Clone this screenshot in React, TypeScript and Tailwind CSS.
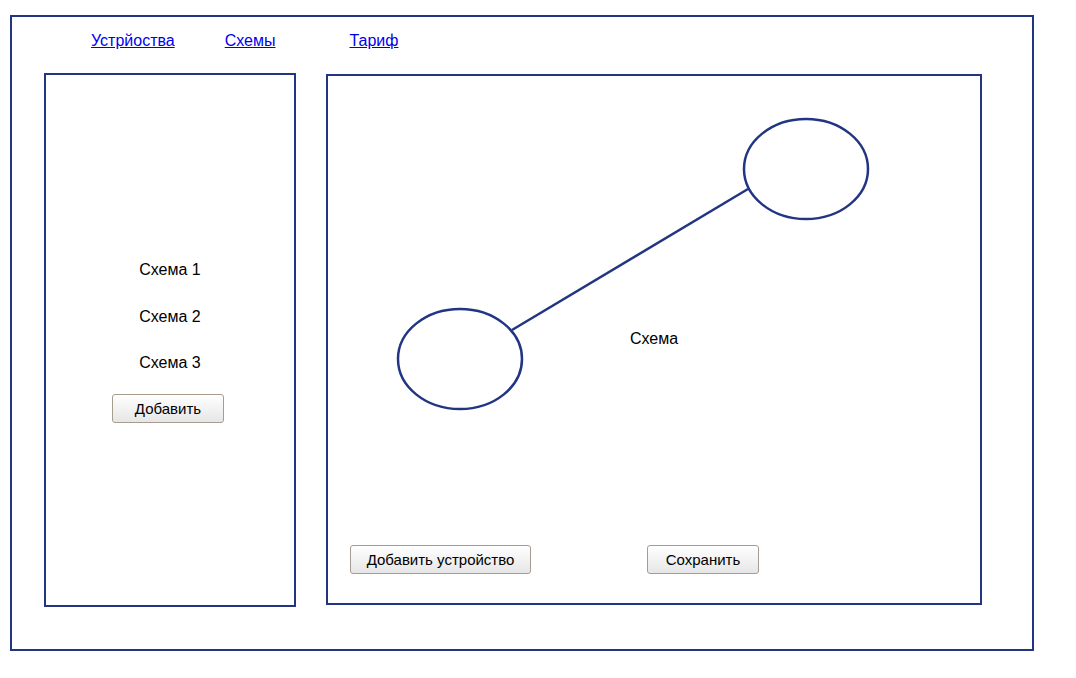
const EDGE = "border-2 border-[#213583]";

function Btn({ children, className = "" }: { children: string; className?: string }) {
  return (
    <button
      className={`h-[29px] rounded-[3px] border border-[#a89c8e] bg-gradient-to-b from-white to-[#e6e6e6] text-[15px] leading-none text-black ${className}`}
    >
      {children}
    </button>
  );
}

export default function App() {
  return (
    <div className="h-[678px] w-[1076px] bg-white pl-[10px] pt-[15px] font-['Liberation_Sans',Arial,sans-serif] text-black">
      <div className={`flex h-[636px] w-[1024px] flex-col ${EDGE}`}>
        <nav className="flex pl-[79px] pt-[15px] text-base leading-[18px]">
          <a href="#" className="text-[#0000ee] underline">Устрйоства</a>
          <a href="#" className="ml-[50px] text-[#0000ee] underline">Схемы</a>
          <a href="#" className="ml-[74px] text-[#0000ee] underline">Тариф</a>
        </nav>

        <div className="mt-[23px] flex items-start pl-[32px]">
          <aside className={`flex h-[534px] w-[252px] flex-col items-center justify-center pt-1 ${EDGE}`}>
            <div className="h-[18px] text-base leading-[18px]">Схема 1</div>
            <div className="mt-[29px] h-[18px] text-base leading-[18px]">Схема 2</div>
            <div className="mt-[28px] h-[18px] text-base leading-[18px]">Схема 3</div>
            <Btn className="mr-1 mt-[22px] w-[112px]">Добавить</Btn>
          </aside>

          <section className={`relative ml-[30px] mt-px flex h-[531px] w-[656px] flex-col pt-[57px] ${EDGE}`}>
            <svg className="absolute inset-0 h-full w-full" viewBox="0 0 652 527">
              <g fill="none" stroke="#213583" strokeWidth="2.5">
                <line x1="184" y1="254" x2="420" y2="113" />
                <ellipse cx="132" cy="283" rx="62" ry="50" fill="white" />
                <ellipse cx="478" cy="93" rx="62" ry="50" fill="white" />
              </g>
            </svg>
            <div className="relative flex flex-1 items-center justify-center text-base leading-[18px]">
              Схема
            </div>
            <div className="relative mb-[29px] flex pl-[22px]">
              <Btn className="w-[181px]">Добавить устройство</Btn>
              <Btn className="ml-[116px] w-[112px]">Сохранить</Btn>
            </div>
          </section>
        </div>
      </div>
    </div>
  );
}
